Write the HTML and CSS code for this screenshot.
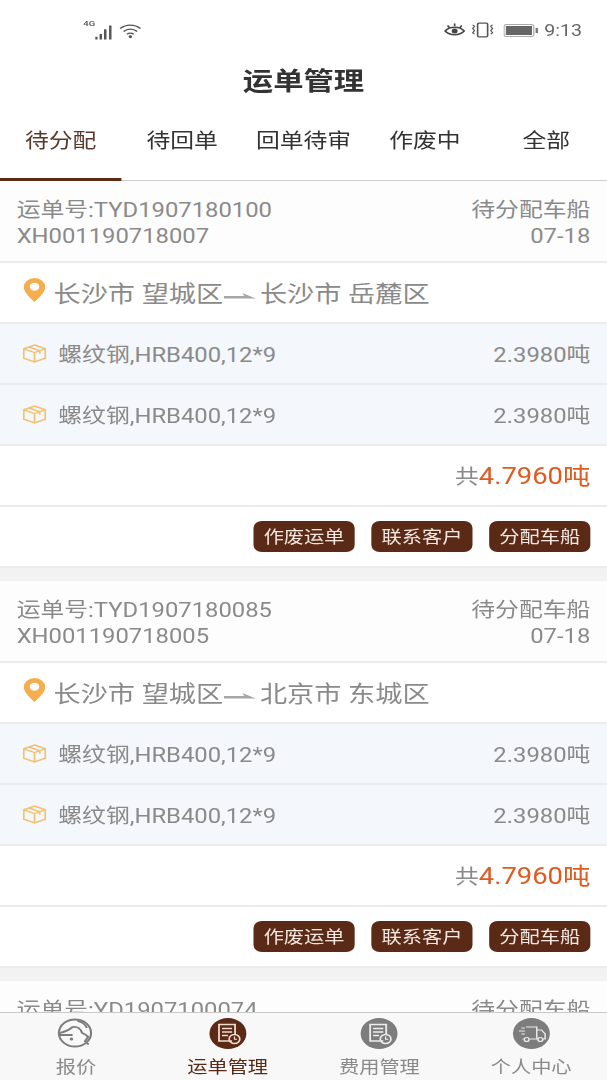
FILE: index.html
```html
<!DOCTYPE html>
<html lang="zh-CN">
<head>
    <meta charset="utf-8">
    <title>运单管理</title>
    <link rel="stylesheet" href="styles.css">
</head>
<body>
<svg class="defs">
    <symbol id="pin" viewBox="0 0 18 24">
        <path d="M9 0a9 9 0 0 0-9 9c0 5.500 5.500 11 9 15 3.500-4 9-9.500 9-15a9 9 0 0 0-9-9z" fill="#f6ad4d"/>
        <circle cx="9" cy="8.700" r="4" fill="#fff"/>
    </symbol>
    <symbol id="arrow" viewBox="0 0 28 10">
        <path d="M0 6h18l-2-3 12 5.500H0z" fill="#a6a6a6"/>
    </symbol>
    <symbol id="box" viewBox="0 0 20 19">
        <path d="M10 1l9 3.800v9.400L10 18l-9-3.800V4.800zM1 4.800l9 3.800 9-3.800M10 8.600V18M5.500 3l9 3.800v3" fill="none" stroke="#f2c16f" stroke-width="1.400"/>
    </symbol>
    <symbol id="doc" viewBox="0 0 31 31">
        <path d="M19 23h-11v-16.500h13.500v10M10.500 10.500h8.500M10.500 14h8.500M10.500 17.500h5" fill="none" stroke="currentColor" stroke-width="1.500"/>
        <circle cx="21" cy="21" r="4.500" fill="none" stroke="currentColor" stroke-width="1.400"/>
        <path d="M21 18.500v2.700h2.200" fill="none" stroke="currentColor" stroke-width="1"/>
    </symbol>
</svg>

<div class="screen">
    <div class="status">
        <div class="status-left">
            <span class="net">4G</span>
            <svg class="signal" viewBox="0 0 16 16"><path d="M1 13v3M5 10v6M9 5v11M13.500 1v15" stroke="#555" stroke-width="2.200"/></svg>
            <svg class="wifi" viewBox="0 0 20 16"><path d="M1 5.500c5-5 13-5 18 0M4 8.500c3.500-3.300 8.500-3.300 12 0M7 11.500c2-1.600 4-1.600 6 0" fill="none" stroke="#555" stroke-width="1.400"/><circle cx="10" cy="14" r="1.500" fill="#555"/></svg>
        </div>
        <div class="status-right">
            <svg class="eye" viewBox="0 0 18 14"><path d="M1 7.500c4-5 12-5 16 0-4 5-12 5-16 0zM3 2l1.500 2M9 0v2.500M15 2l-1.500 2" fill="none" stroke="#444" stroke-width="1.400"/><circle cx="9" cy="7.500" r="2.500" fill="#444"/></svg>
            <svg class="vibrate" viewBox="0 0 20 15"><rect x="6" y="1" width="8" height="13" rx="1" fill="none" stroke="#555" stroke-width="1.300"/><path d="M2 2.500l1.500 1.500-1.500 2 1.500 2-1.500 2 1.500 1.500M18 2.500l-1.500 1.500 1.500 2-1.500 2 1.500 2-1.500 1.500" fill="none" stroke="#555"/></svg>
            <svg class="battery" viewBox="0 0 29 13"><rect x="0.500" y="0.500" width="25" height="12" rx="2" fill="none" stroke="#aaa"/><rect x="2" y="2" width="22" height="9" fill="#666"/><rect x="27" y="4" width="2" height="5" fill="#777"/></svg>
            <span class="time">9:13</span>
        </div>
    </div>

    <h1 class="title">运单管理</h1>

    <div class="tabs">
        <div class="tab active">待分配</div>
        <div class="tab">待回单</div>
        <div class="tab">回单待审</div>
        <div class="tab">作废中</div>
        <div class="tab">全部</div>
    </div>

    <div class="list">
        <div class="card">
            <div class="card-head">
                <div class="head-row"><span>运单号:TYD1907180100</span><span>待分配车船</span></div>
                <div class="head-row"><span>XH001190718007</span><span>07-18</span></div>
            </div>
            <div class="route">
                <svg class="pin"><use href="#pin"/></svg>
                <span>长沙市 望城区</span>
                <svg class="arrow"><use href="#arrow"/></svg>
                <span>长沙市 岳麓区</span>
            </div>
            <div class="goods">
                <svg class="box"><use href="#box"/></svg>
                <span class="goods-name">螺纹钢,HRB400,12*9</span>
                <span>2.3980吨</span>
            </div>
            <div class="goods">
                <svg class="box"><use href="#box"/></svg>
                <span class="goods-name">螺纹钢,HRB400,12*9</span>
                <span>2.3980吨</span>
            </div>
            <div class="total">共<b>4.7960吨</b></div>
            <div class="actions">
                <a href="#" class="btn">作废运单</a>
                <a href="#" class="btn">联系客户</a>
                <a href="#" class="btn">分配车船</a>
            </div>
        </div>

        <div class="card">
            <div class="card-head">
                <div class="head-row"><span>运单号:TYD1907180085</span><span>待分配车船</span></div>
                <div class="head-row"><span>XH001190718005</span><span>07-18</span></div>
            </div>
            <div class="route">
                <svg class="pin"><use href="#pin"/></svg>
                <span>长沙市 望城区</span>
                <svg class="arrow"><use href="#arrow"/></svg>
                <span>北京市 东城区</span>
            </div>
            <div class="goods">
                <svg class="box"><use href="#box"/></svg>
                <span class="goods-name">螺纹钢,HRB400,12*9</span>
                <span>2.3980吨</span>
            </div>
            <div class="goods">
                <svg class="box"><use href="#box"/></svg>
                <span class="goods-name">螺纹钢,HRB400,12*9</span>
                <span>2.3980吨</span>
            </div>
            <div class="total">共<b>4.7960吨</b></div>
            <div class="actions">
                <a href="#" class="btn">作废运单</a>
                <a href="#" class="btn">联系客户</a>
                <a href="#" class="btn">分配车船</a>
            </div>
        </div>

        <div class="card">
            <div class="card-head">
                <div class="head-row"><span>运单号:YD1907100074</span><span>待分配车船</span></div>
            </div>
        </div>
    </div>

    <div class="nav">
        <div class="nav-item">
            <svg class="nav-icon quote" viewBox="0 0 31 31"><circle cx="15" cy="15" r="13.500" fill="none" stroke="#7d7d7d" stroke-width="1.800"/><path d="M2 15c4-1 8-3 11-6 4-1 7 2 8 6 2 1 4 2 5 4l-3 5M2 15v2h11M17 3c4 1 7 4 8 7M25 25l4 4" fill="none" stroke="#7d7d7d" stroke-width="1.800"/><circle cx="12" cy="21" r="1.500" fill="#7d7d7d"/></svg>
            <span>报价</span>
        </div>
        <div class="nav-item active">
            <svg class="nav-icon"><use href="#doc"/></svg>
            <span>运单管理</span>
        </div>
        <div class="nav-item">
            <svg class="nav-icon"><use href="#doc"/></svg>
            <span>费用管理</span>
        </div>
        <div class="nav-item">
            <svg class="nav-icon" viewBox="0 0 31 31"><path d="M11 9h9v12h-6M20 12h4l3 4v5h-2M20 21h1M7 10h3M5 13h5M7 16h3M8 21h1" fill="none" stroke="currentColor" stroke-width="1.200"/><circle cx="11.500" cy="21.500" r="2" fill="none" stroke="currentColor" stroke-width="1.200"/><circle cx="23" cy="21.500" r="2" fill="none" stroke="currentColor" stroke-width="1.200"/></svg>
            <span>个人中心</span>
        </div>
    </div>
</div>
</body>
</html>
```

FILE: styles.css
```css
html, body {
    margin: 0;
    height: 1080px;
    overflow: hidden;
    background-color: #fff;
}

/* the shot is wider than it is tall by about 1.19, so everything is stretched */
.screen {
    display: flex;
    flex-direction: column;
    width: 510px;
    height: 1080px;
    transform: scaleX(1.1902);
    transform-origin: 0 0;
    font-family: Roboto, "Noto Sans CJK SC", sans-serif;
    font-size: 20px;
    color: #8a8a8a;
}

.defs {
    display: none;
}

.status {
    display: flex;
    justify-content: space-between;
    align-items: center;
    height: 60px;
    padding: 0 21px 0 70px;
    box-sizing: border-box;
    flex-shrink: 0;
}

.status-left, .status-right {
    display: flex;
    align-items: center;
}

.net {
    align-self: flex-start;
    margin-top: -2px;
    font-size: 8px;
    font-weight: 500;
    color: #555;
}

.signal {
    width: 15px;
    height: 16px;
    margin: 3px 5px 0 0;
}

.wifi {
    width: 19px;
    height: 16px;
    margin-top: 1px;
}

.eye {
    width: 18px;
    height: 15px;
    margin-right: 4px;
}

.vibrate {
    width: 21px;
    height: 16px;
    margin-right: 7px;
}

.battery {
    width: 29px;
    height: 13px;
    margin-right: 5px;
}

.time {
    font-size: 16.500px;
    color: #666;
}

.title {
    margin: 0;
    height: 43px;
    line-height: 43px;
    flex-shrink: 0;
    text-align: center;
    font-size: 25.500px;
    font-weight: 700;
    color: #333;
}

.tabs {
    display: grid;
    grid-template-columns: repeat(5, 1fr);
    height: 78px;
    flex-shrink: 0;
    box-sizing: border-box;
    border-bottom: 1px solid #cfcfcf;
}

.tab {
    padding-top: 23px;
    text-align: center;
    line-height: 30px;
    color: #333;
}

.tab.active {
    color: #5a3a2c;
    border-bottom: 3px solid #5a2a17;
    margin-bottom: -1px;
}

.list {
    flex: 1;
    min-height: 0;
    overflow: hidden;
    background-color: #f2f2f2;
}

.card {
    margin-bottom: 13px;
    background-color: #fff;
}

.card-head {
    padding: 16px 14px 12px;
    border-bottom: 2px solid #e9ebee;
    background-color: #fdfdfe;
}

.head-row {
    display: flex;
    justify-content: space-between;
    line-height: 26px;
}

.route {
    display: flex;
    align-items: center;
    height: 61px;
    box-sizing: border-box;
    padding: 0 14px 0 20px;
    border-bottom: 2px solid #e9ebee;
    font-size: 22.800px;
}

.pin {
    width: 18px;
    height: 24px;
    margin: -5px 7px 0 0;
}

.arrow {
    width: 27px;
    height: 10px;
    margin: 4px 3px 0 1px;
}

.goods {
    display: flex;
    align-items: center;
    height: 61px;
    box-sizing: border-box;
    padding: 0 14px 0 19px;
    border-bottom: 2px solid #e9ebee;
    background-color: #f4f7fc;
}

.box {
    width: 20px;
    height: 19px;
    margin-right: 10px;
}

.goods-name {
    flex: 1;
}

.total {
    height: 61px;
    line-height: 61px;
    box-sizing: border-box;
    padding-right: 14px;
    border-bottom: 2px solid #e9ebee;
    text-align: right;
    font-size: 20px;
}

.total b {
    font-size: 23px;
    font-weight: 400;
    color: #e05a20;
}

.actions {
    display: flex;
    justify-content: flex-end;
    align-items: center;
    gap: 14px;
    height: 61px;
    box-sizing: border-box;
    padding-right: 14px;
    border-bottom: 2px solid #e9ebee;
}

.btn {
    width: 85px;
    height: 31px;
    line-height: 32px;
    text-align: center;
    border-radius: 7px;
    background-color: #5a2a17;
    color: #f3e9e2;
    font-size: 17px;
    text-decoration: none;
}

.nav {
    display: grid;
    grid-template-columns: repeat(4, 1fr);
    height: 68px;
    flex-shrink: 0;
    box-sizing: border-box;
    border-top: 1px solid #c9c9c9;
    background-color: #f8f8f8;
    font-size: 17px;
    text-align: center;
}

.nav-item {
    display: flex;
    flex-direction: column;
    align-items: center;
    padding-top: 5px;
}

.nav-item span {
    line-height: 24px;
    margin-top: 6px;
}

.nav-icon {
    width: 31px;
    height: 31px;
    border-radius: 50%;
    background-color: #7d7d7d;
    color: #eee;
}

.nav-icon.quote {
    background-color: transparent;
}

.nav-item.active span {
    color: #5a2a17;
}

.nav-item.active .nav-icon {
    background-color: #5a2a17;
    color: #f0ddd0;
}
```
